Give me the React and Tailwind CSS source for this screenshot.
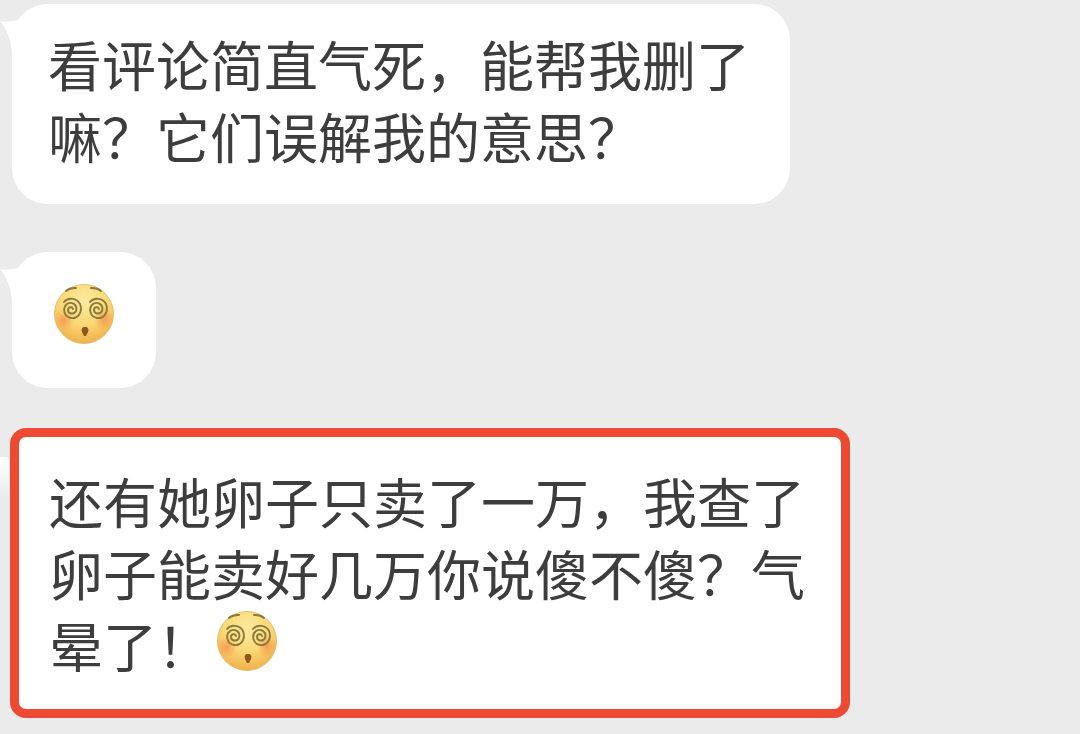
function Tail() {
  return (
    <svg className="absolute top-3.5 -left-3 h-10 w-9" viewBox="0 0 36 40" fill="#fff" aria-hidden="true">
      <path d="M0 3 C7 4 15 4 22 0 L36 16 L12 40 C12 24 8 13 0 3 Z" />
    </svg>
  );
}

function DizzyFace({ id }) {
  return (
    <svg className="size-16 shrink-0" viewBox="0 0 64 64" role="img" aria-label="晕">
      <defs>
        <radialGradient id={`${id}-skin`} cx="50%" cy="28%" r="72%">
          <stop offset="0" stopColor="#fcea9f" />
          <stop offset="0.55" stopColor="#fad976" />
          <stop offset="1" stopColor="#f0b04c" />
        </radialGradient>
        <radialGradient id={`${id}-cheek`}>
          <stop offset="0" stopColor="#f58f4c" stopOpacity="0.75" />
          <stop offset="1" stopColor="#f58f4c" stopOpacity="0" />
        </radialGradient>
      </defs>
      <circle cx="32" cy="32" r="29.5" fill={`url(#${id}-skin)`} stroke="#e6bd72" strokeWidth="1" />
      <ellipse cx="12" cy="38" rx="10" ry="11" fill={`url(#${id}-cheek)`} />
      <ellipse cx="52" cy="37" rx="10" ry="12" fill={`url(#${id}-cheek)`} />
      <g fill="none" stroke="#8a7a3d" strokeLinecap="round">
        <path d="M14 9 Q18 5.500 24 6" strokeWidth="2" />
        <path d="M39 6 Q45 5.500 49 9" strokeWidth="2" />
        <g transform="translate(1 2)" strokeWidth="1.900">
          <path d="M11 18 C15 13 24 14 27 20 C30 28 25 35 18 34 C11 33 9 24 14 20 C19 17 25 21 23 27 C21 31 15 30 15 26 C15 23 19 22 20 25" />
          <path d="M37 18 C41 13 50 14 53 20 C56 28 51 35 44 34 C37 33 35 24 40 20 C45 17 51 21 49 27 C47 31 41 30 41 26 C41 23 45 22 46 25" />
        </g>
      </g>
      <path d="M33 45 C36 45 37 47 36 50 L34 54 H32 L30 50 C29 47 30 45 33 45 Z" fill="#8e571b" />
    </svg>
  );
}

export default function App() {
  return (
    <main className="flex min-h-screen flex-col items-start bg-[#ebebeb] pt-1 pb-4 font-['Noto_Sans_CJK_SC',sans-serif] text-[54px] leading-[72px] text-[#3d3d3d]">
      <article className="relative ml-3 rounded-[36px] bg-white pt-6 pr-10 pb-8 pl-9">
        <Tail />
        <p>
          看评论简直气死，能帮我删了
          <br />
          嘛？它们误解我的意思？
        </p>
      </article>

      <article className="relative mt-12 ml-3 rounded-[36px] bg-white px-10 pt-[30px] pb-[42px]">
        <Tail />
        <DizzyFace id="first" />
      </article>

      <article className="relative mt-10 ml-2.5 rounded-2xl border-[9px] border-[#ee4932] bg-white pt-7 pr-9 pb-7 pl-[30px]">
        <span className="absolute top-5 -left-5 h-10 w-2.5 rounded-tr-sm bg-gradient-to-b from-white to-[#ebebeb]" />
        <p>
          还有她卵子只卖了一万，我查了
          <br />
          卵子能卖好几万你说傻不傻？气
        </p>
        <div className="flex items-start gap-1">
          <p>晕了！</p>
          <DizzyFace id="second" />
        </div>
      </article>
    </main>
  );
}
